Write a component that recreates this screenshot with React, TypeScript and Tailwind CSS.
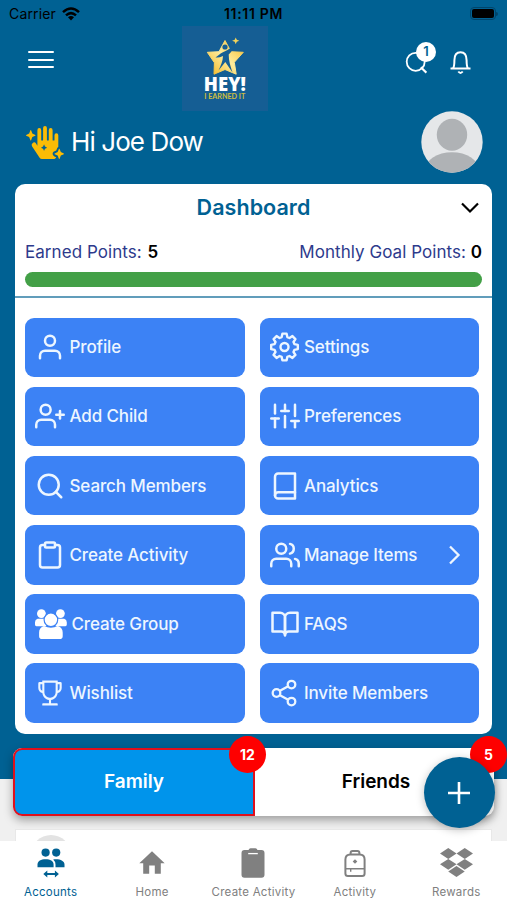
import type { ReactNode } from 'react';
import {
  FiBook, FiBookOpen, FiClipboard, FiSearch, FiSliders, FiUser, FiUserPlus, FiUsers,
} from 'react-icons/fi';
import { AiOutlineTrophy } from 'react-icons/ai';
import { FaDropbox, FaHandSparkles } from 'react-icons/fa';

function GroupIcon() {
  return (
    <svg width="32" height="30" viewBox="0 0 32 30" fill="white">
      <circle cx="6.4" cy="4.6" r="4.4" />
      <circle cx="25.4" cy="4.6" r="4.4" />
      <path d="M2.6 9.8h8.6v7.4H1.4Q0 17.2 0 15.6v-2.4q0-2.6 2.6-3.4z" />
      <path d="M29.2 9.8h-8.6v7.4h9.8q1.4 0 1.4-1.6v-2.4q0-2.6-2.6-3.4z" />
      <circle cx="15.9" cy="10.8" r="6.8" stroke="#3c82f5" strokeWidth="1.2" />
      <path d="M9 17q6.9 3.6 13.8 0c3.4 1 4.9 3.4 4.9 6.5v3.7q0 2.8-3 2.8H7.1q-3 0-3-2.8v-3.7C4.1 20.4 5.6 18 9 17z" />
    </svg>
  );
}

// four points per tooth, eight teeth
const gearPoints = Array.from({ length: 8 }, (_, i) => i * 45)
  .flatMap((a) => [[a - 9, 13.5], [a + 9, 13.5], [a + 16, 10.3], [a + 29, 10.3]])
  .map(([a, r]) => {
    const rad = (a * Math.PI) / 180;
    return `${(14.5 + r * Math.cos(rad)).toFixed(2)},${(15 + r * Math.sin(rad)).toFixed(2)}`;
  })
  .join(' ');

function GearIcon() {
  return (
    <svg width="30" height="30" viewBox="0 0 30 30" fill="none" stroke="currentColor" strokeWidth="2.4" strokeLinejoin="round">
      <polygon points={gearPoints} />
      <circle cx="14.5" cy="15" r="4" />
    </svg>
  );
}

function ShareIcon() {
  return (
    <svg width="30" height="30" viewBox="0 0 30 30" fill="none" stroke="currentColor" strokeWidth="2.3">
      <circle cx="6.5" cy="15" r="3.8" />
      <circle cx="21.5" cy="6.6" r="3.8" />
      <circle cx="21.5" cy="23.6" r="3.8" />
      <path d="M9.5 13l8.7-4.700M9.5 17l8.7 4.800" />
    </svg>
  );
}

function Logo() {
  return (
    <svg width="86" height="85" viewBox="0 0 86 85" className="bg-[#155e94]">
      <defs>
        <linearGradient id="gold" x1="0" y1="1" x2="1" y2="0">
          <stop offset="0" stopColor="#f3b51c" />
          <stop offset=".5" stopColor="#fdeb9c" />
          <stop offset="1" stopColor="#f4b925" />
        </linearGradient>
      </defs>
      <path
        d="M43 14.5l6 11.2 12.3.6-9 10 1.9 11.9L43 43.500 32 48.200l.4-11.500-7.100-10.400 11.700-.6z"
        fill="url(#gold)"
        stroke="url(#gold)"
        strokeLinejoin="round"
      />
      <circle cx="43" cy="21" r="2.6" fill="#155e94" />
      <path
        d="M33.500 31.500q5.500-4.700 9.500-6.300 5-1.500 10.500-8.200-1.500 6.500-6.800 11.500c0 6.500 1.800 12 3.800 18l-7.200-10.500-6.800 8.500c2.400-5 4.300-9.500 4.500-14.500q-4 2-7.500 1.500z"
        fill="#155e94"
      />
      <path d="M53.700 11.500l1.100 2.300 2.500.9-2.500 1-1.100 2.600-1-2.600-2.600-1 2.600-.9z" fill="#f3d35a" />
      <text
        x="21.8"
        y="65.2"
        textLength="42"
        lengthAdjust="spacingAndGlyphs"
        className="fill-white font-['Open_Sans',sans-serif] text-[19.5px] font-extrabold"
      >
        HEY!
      </text>
      <text
        x="22.3"
        y="73"
        textLength="41"
        lengthAdjust="spacingAndGlyphs"
        className="fill-[#cdbd40] font-[Lato,sans-serif] text-[6.5px] font-bold"
      >
        I EARNED IT
      </text>
    </svg>
  );
}

const menu: { label: string; icon: ReactNode; arrow?: boolean }[] = [
  { label: 'Profile', icon: <FiUser size={30} /> },
  { label: 'Settings', icon: <GearIcon /> },
  { label: 'Add Child', icon: <FiUserPlus size={30} /> },
  { label: 'Preferences', icon: <FiSliders size={30} /> },
  { label: 'Search Members', icon: <FiSearch size={30} /> },
  { label: 'Analytics', icon: <FiBook size={30} /> },
  { label: 'Create Activity', icon: <FiClipboard size={30} /> },
  { label: 'Manage Items', icon: <FiUsers size={30} />, arrow: true },
  { label: 'Create Group', icon: <GroupIcon /> },
  { label: 'FAQS', icon: <FiBookOpen size={30} /> },
  { label: 'Wishlist', icon: <AiOutlineTrophy className="h-[32px] w-[30px]" preserveAspectRatio="none" /> },
  { label: 'Invite Members', icon: <ShareIcon /> },
];

const tabs: { label: string; icon: ReactNode }[] = [
  {
    label: 'Accounts',
    icon: (
      <svg width="28" height="30" viewBox="0 0 28 30" fill="currentColor">
        <circle cx="8.6" cy="4.6" r="4.1" />
        <circle cx="19.2" cy="4.6" r="4.1" />
        <path d="M.5 19.3v-2.8C.5 13 4 11.3 8.6 11.3s8 1.7 8 5.2v2.8z" />
        <path d="M16.2 11.5c6.5-.8 11.3 1.4 11.3 5v2.8h-9v-2.8q0-3-2.3-5z" />
        <path d="M6.3 26l4-3.600v2.500h7.600v-2.500l4 3.600-4 3.600v-2.500h-7.600v2.500z" />
      </svg>
    ),
  },
  {
    label: 'Home',
    icon: (
      <svg width="26" height="30" viewBox="0 0 26 30" fill="currentColor">
        <path d="M13 3.200l12.700 12.100h-3.900v10.500h-6v-8.300h-5.600v8.300h-6V15.300H.3z" />
      </svg>
    ),
  },
  {
    label: 'Create Activity',
    icon: (
      <svg width="24" height="30" viewBox="0 0 24 30">
        <path d="M3.500 2h4q.6-1.700 2-1.700h5q1.400 0 2 1.700h4q3 0 3 3v21.700q0 3-3 3h-17q-3 0-3-3V5q0-3 3-3z" fill="currentColor" />
        <path d="M7.200 5.600h9.600" stroke="#fff" strokeWidth="1.3" />
      </svg>
    ),
  },
  {
    label: 'Activity',
    icon: (
      <svg width="24" height="30" viewBox="0 0 24 30" fill="none" stroke="currentColor" strokeWidth="2">
        <path d="M2.400 11.500q0-5 5-5h9.200q5 0 5 5V25.500q0 2.500-2.500 2.500H4.900q-2.500 0-2.500-2.500z" />
        <path d="M7.600 6.500V5q0-2 2-2h4.800q2 0 2 2v1.500" />
        <path d="M2.400 20.800h19.200M7.700 20.800v3" strokeWidth="1.4" />
        <path d="M12 11.200l2.300 2.300-2.300 2.300-2.300-2.300z" fill="currentColor" stroke="none" />
      </svg>
    ),
  },
  { label: 'Rewards', icon: <FaDropbox className="h-[33px] w-[33px]" preserveAspectRatio="none" /> },
];

function StatusBar() {
  return (
    <div className="grid h-[26px] grid-cols-3 items-center px-[9px] pt-px text-black">
      <div className="flex items-center gap-[6px]">
        <span className="text-[14px] tracking-[0.15px]">Carrier</span>
        <svg width="18" height="14" viewBox="0 0 18 14" fill="none" stroke="currentColor" strokeWidth="2.5">
          <path d="M1 5.200Q9-2.200 17 5.200" />
          <path d="M4 8.400q5-4.600 10 0" />
          <path d="M9 13.400l3-3.200q-3-2.200-6 0z" fill="currentColor" stroke="none" />
        </svg>
      </div>
      <span className="text-center text-[14px] font-semibold tracking-[0.7px]">11:11 PM</span>
      <div className="flex items-center justify-end">
        <div className="h-[13px] w-[26px] rounded-[4px] border border-[#00456b] p-[1px]">
          <div className="h-full rounded-[2px] bg-black" />
        </div>
        <div className="h-1 w-[2px] rounded-r bg-[#00456b]" />
      </div>
    </div>
  );
}

function Header() {
  return (
    <>
      <div className="flex h-[84px] items-start justify-between pr-[36px] pl-[28px]">
        <div className="mt-[25px] flex w-[108px] flex-col gap-[5.5px]">
          <div className="h-[2px] w-[26px] rounded bg-white" />
          <div className="h-[2px] w-[26px] rounded bg-white" />
          <div className="h-[2px] w-[26px] rounded bg-white" />
        </div>
        <div className="ml-[46px]">
          <Logo />
        </div>
        <div className="mt-[25px] flex flex-1 justify-end gap-[23px] text-white">
          <div className="relative">
            <svg width="22" height="23" viewBox="0 0 22 23" fill="none" stroke="currentColor" strokeWidth="1.8">
              <circle cx="10.700" cy="10.800" r="9" />
              <path d="M15.800 16.200l5.600 5.400" strokeWidth="2.2" />
            </svg>
            <span className="absolute -top-[9px] left-[11px] flex size-5 items-center justify-center rounded-full bg-white text-[13px] font-semibold text-[#006193]">
              1
            </span>
          </div>
          <svg width="21" height="24" viewBox="0 0 21 24" fill="none" stroke="currentColor" strokeWidth="2">
            <path d="M.5 17.500h20M3 17.300c1-1 1.400-2.500 1.400-8C4.400 4 7 1.200 10.500 1.200s6.100 2.800 6.100 8.100c0 5.500.4 7 1.400 8" />
            <path d="M8.300 20.500q2.200 2.800 4.400 0" />
          </svg>
        </div>
      </div>
      <div className="flex h-[74px] items-start justify-between pt-[1px] pr-[24px] pl-[26px]">
        <div className="flex items-center gap-[7px] pt-[14px] text-white">
          <FaHandSparkles className="h-[33px] w-[38px] text-[#fbbc05]" preserveAspectRatio="none" />
          <h1 className="text-[26px] leading-[34px] tracking-[-0.9px]">Hi Joe Dow</h1>
        </div>
        <svg width="62" height="62" viewBox="0 0 62 62">
          <defs>
            <clipPath id="avatar"><circle cx="31" cy="31" r="30.7" /></clipPath>
          </defs>
          <g clipPath="url(#avatar)">
            <rect width="62" height="62" fill="#e5e7e9" />
            <ellipse cx="31" cy="23.7" rx="15.2" ry="16" fill="#afb2b5" />
            <ellipse cx="31" cy="59" rx="27" ry="17.8" fill="#afb2b5" />
          </g>
        </svg>
      </div>
    </>
  );
}

function Dashboard() {
  return (
    <section className="mx-auto h-[549.5px] w-[477px] shrink-0 rounded-[10px] bg-white">
      <div className="relative h-[48px] text-center">
        <h2 className="text-[21.5px] leading-[47px] font-semibold tracking-[0.05px] text-[#006193]">Dashboard</h2>
        <svg className="absolute top-[18px] right-[13px]" width="18" height="12" viewBox="0 0 18 12" fill="none" stroke="black" strokeWidth="2.2">
          <path d="M1 1.500l8 8 8-8" />
        </svg>
      </div>
      <div className="flex h-[39.5px] items-center justify-between px-[10px] pt-[2px] text-[17px] tracking-[0.05px] text-[#2d3a8c]">
        <p>Earned Points: <b className="ml-px font-semibold text-black">5</b></p>
        <p>Monthly Goal Points: <b className="font-semibold text-black">0</b></p>
      </div>
      <div className="mx-[10px] h-[15px] rounded-full bg-[#43a047]" />
      <div className="mt-[9px] h-[2px] bg-[#619dbb]" />
      <div className="grid grid-cols-[219.5px_219.5px] gap-x-[15px] gap-y-[9.7px] pt-[20px] pl-[10px]">
        {menu.map(({ label, icon, arrow }) => (
          <button
            key={label}
            type="button"
            className="flex h-[59.5px] items-center gap-[4.5px] rounded-[9px] bg-[#3c82f5] pr-[17px] pl-[10px] text-[17px] font-medium tracking-[-0.12px] text-[#edf6ff]"
          >
            {icon}
            <span className="pt-[1.5px]">{label}</span>
            {arrow && (
              <svg className="mr-px ml-auto" width="13" height="20" viewBox="0 0 13 20" fill="none" stroke="currentColor" strokeWidth="2.3">
                <path d="M2 1.500l8.500 8.500L2 18.500" />
              </svg>
            )}
          </button>
        ))}
      </div>
    </section>
  );
}

function Badge({ children }: { children: ReactNode }) {
  return (
    <span className="absolute -top-[12px] -right-[13px] flex size-[37px] items-center justify-center rounded-full bg-[#fe0000] text-[14px] font-bold text-white">
      {children}
    </span>
  );
}

export default function App() {
  return (
    <div className="relative flex h-[900px] w-[507px] flex-col overflow-hidden bg-[linear-gradient(#006193_779px,#f0f0f0_779px)] font-[Inter,sans-serif]">
      <StatusBar />
      <Header />
      <Dashboard />

      <div className="mt-[14.5px] ml-[13px] flex h-[68px] w-[481px] shrink-0 rounded-[9px] bg-white text-[19px] font-semibold shadow-[0_4px_10px_rgba(0,0,0,0.35)]">
        <div className="relative flex w-[242px] items-center justify-center rounded-l-[9px] border-[2.5px] border-[#e0101c] bg-[#0094eb] text-white">
          <span>Family</span>
          <span className="absolute -top-[14px] -right-[13px] flex size-[37px] items-center justify-center rounded-full bg-[#fe0000] text-[14px] font-bold">
            12
          </span>
        </div>
        <div className="relative flex flex-1 items-center justify-center text-black">
          <span className="pl-[3px]">Friends</span>
          <Badge>5</Badge>
        </div>
      </div>

      <div className="mx-auto mt-[13px] h-[12px] w-[477px] shrink-0 overflow-hidden border border-b-0 border-[#e8e8e8] bg-white pt-[5px] pl-[15px]">
        <div className="size-[40px] rounded-full bg-[#e3e3e3]" />
      </div>

      <button
        type="button"
        className="absolute top-[757px] right-[12px] flex size-[71px] items-center justify-center rounded-full bg-[#006193] shadow-[0_2px_8px_rgba(0,0,0,0.25)]"
      >
        <svg className="mr-[1px]" width="22" height="22" viewBox="0 0 22 22" stroke="white" strokeWidth="2.6">
          <path d="M11 0v22M0 11h22" />
        </svg>
      </button>

      <nav className="relative grid h-[59px] shrink-0 grid-cols-5 bg-white text-[#808080]">
        {tabs.map(({ label, icon }) => (
          <div
            key={label}
            className="flex flex-col items-center pt-[6.5px] first:text-[#006193]"
          >
            <div className="flex h-[30px] items-center">{icon}</div>
            <span className="mt-[6px] text-[11.5px] leading-4 tracking-[0.25px] whitespace-nowrap">{label}</span>
          </div>
        ))}
      </nav>
    </div>
  );
}
